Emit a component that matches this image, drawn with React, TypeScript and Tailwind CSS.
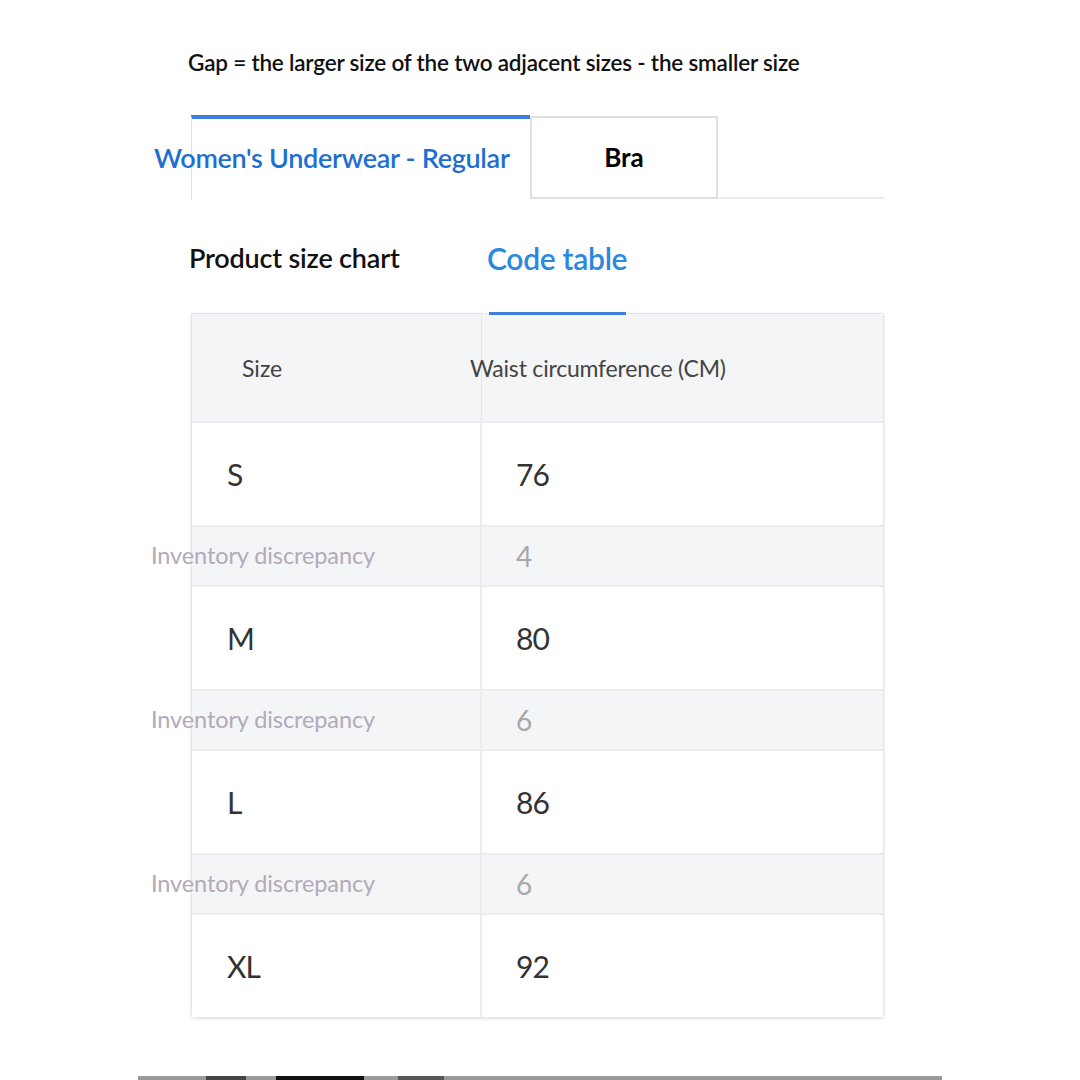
const rows = [
  { size: 'S', waist: '76', gap: '4' },
  { size: 'M', waist: '80', gap: '6' },
  { size: 'L', waist: '86', gap: '6' },
  { size: 'XL', waist: '92', gap: '' },
]

export default function App() {
  return (
    <div className="w-[1080px] h-[1080px] bg-white overflow-hidden flex flex-col font-['Lato','Noto_Sans',sans-serif]">
      <div className="pt-[49px] pl-[188px] text-[22.5px] leading-[28px] font-semibold text-[#111] tracking-[-0.2px]">
        Gap = the larger size of the two adjacent sizes - the smaller size
      </div>

      {/* category tabs */}
      <div className="mt-[38px] ml-[191px] w-[693px] flex h-[85px]">
        <div className="w-[339px] border-t-4 border-[#3d7de0] border-l border-l-[#e2e2e2] flex items-center">
          <span className="-ml-[38px] -mt-[2px] whitespace-nowrap text-[27px] font-semibold text-[#1d6fd2] tracking-[-0.3px]">
            Women's Underwear - Regular
          </span>
        </div>
        <div className="w-[188px] h-[83px] mt-[1px] border-2 border-[#e0e0e0] flex items-center justify-center text-[26px] font-bold text-black">
          Bra
        </div>
        <div className="flex-1 border-b-2 border-[#ececec] h-[84px]" />
      </div>

      {/* sub tabs */}
      <div className="ml-[189px] w-[695px] flex h-[113px] pt-[41px]">
        <div className="w-[298px] text-[27px] font-semibold text-[#111] leading-[34px] tracking-[-0.2px]">Product size chart</div>
        <div className="text-[30px] font-semibold text-[#2a88de] leading-[34px] tracking-[-0.3px]">Code table</div>
      </div>

      {/* table */}
      <div className="ml-[191px] w-[693px] relative border border-[#e6e6e6] rounded-b-[4px] shadow-[0_1px_3px_rgba(0,0,0,0.12)]">
        <div className="absolute -top-[2px] left-[297px] w-[137px] h-[3px] bg-[#3d7de0]" />
        <div className="flex h-[109px] bg-[#f4f5f6] border-b-2 border-[#ececec] text-[23px] text-[#444]">
          <div className="w-[290px] border-r border-[#e6e6e6] flex items-center pl-[50px] pt-[2px]">Size</div>
          <div className="flex-1 flex items-center pt-[2px]">
            <span className="-ml-[12px] whitespace-nowrap tracking-[-0.2px]">Waist circumference (CM)</span>
          </div>
        </div>
        {rows.map((r) => (
          <div key={r.size}>
            <div className="flex h-[102px] bg-white text-[30px] text-[#333] tracking-[-1px]">
              <div className="w-[290px] border-r-2 border-[#ececec] flex items-center pl-[35px]">{r.size}</div>
              <div className="flex-1 flex items-center pl-[34px]">{r.waist}</div>
            </div>
            {r.gap && (
              <div className="flex h-[62px] bg-[#f4f5f6] border-y-2 border-[#ececec]">
                <div className="w-[290px] border-r-2 border-[#ececec] flex items-center">
                  <span className="-ml-[41px] whitespace-nowrap text-[23.5px] text-[#b3aab9] tracking-[-0.1px]">Inventory discrepancy</span>
                </div>
                <div className="flex-1 flex items-center pl-[34px] text-[28px] text-[#a8a8a8]">{r.gap}</div>
              </div>
            )}
          </div>
        ))}
      </div>

      {/* cut-off next section */}
      <div className="mt-auto ml-[138px] w-[804px] h-[4px] bg-[#9a9a9a] flex">
        <div className="ml-[68px] w-[40px] bg-[#444]" />
        <div className="ml-[30px] w-[88px] bg-[#111]" />
        <div className="ml-[34px] w-[46px] bg-[#555]" />
      </div>
    </div>
  )
}
